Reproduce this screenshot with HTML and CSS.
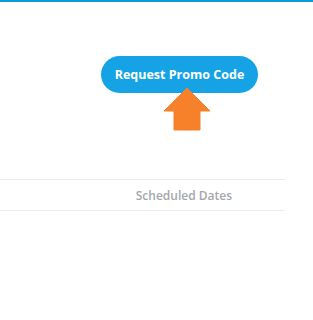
FILE: index.html
```html
<!DOCTYPE html>
<html lang="en">
<head>
  <meta charset="UTF-8">
  <title>Promo Codes</title>
  <link rel="stylesheet" href="styles.css">
</head>
<body>
  <div class="topbar"></div>

  <div class="page">
    <div class="actions">
      <button class="promo-btn">Request Promo Code</button>
      <svg class="hint-arrow" width="48" height="44" viewBox="0 0 48 44">
        <path d="M23 0 L46 23 L36 23 L36 42 L10 42 L10 23 L0 23 Z" fill="#f7802a" stroke="#f7802a" stroke-width="1" stroke-linejoin="round"/>
      </svg>
    </div>

    <table class="dates">
      <thead>
        <tr>
          <th class="spacer"></th>
          <th class="col-dates">Scheduled Dates</th>
        </tr>
      </thead>
    </table>
  </div>
</body>
</html>
```

FILE: styles.css
```css
body {
  margin: 0;
  font-family: "Open Sans", sans-serif;
  background-color: #fff;
}
.topbar {
  height: 2px;
  background-color: #0a9bdc;
}
.page {
  width: 285px;
}
.actions {
  position: relative;
  display: flex;
  justify-content: flex-end;
  padding-right: 27px;
  margin-top: 54px;
  height: 123px;
}
.promo-btn {
  width: 157px;
  height: 37px;
  border: none;
  border-radius: 19px;
  background-color: #16a3e6;
  color: #fff;
  font-family: "Open Sans", sans-serif;
  font-weight: 700;
  font-size: 12.5px;
  padding: 0;
}
.hint-arrow {
  position: absolute;
  left: 164px;
  top: 32px;
}
.dates {
  width: 100%;
  border-collapse: collapse;
}
.dates th {
  height: 30px;
  padding: 0;
  border-top: 1px solid #ececec;
  border-bottom: 1px solid #ececec;
}
.col-dates {
  text-align: right;
  padding-right: 53px !important;
  font-size: 12px;
  font-weight: 600;
  color: #a3a7ab;
}
```
